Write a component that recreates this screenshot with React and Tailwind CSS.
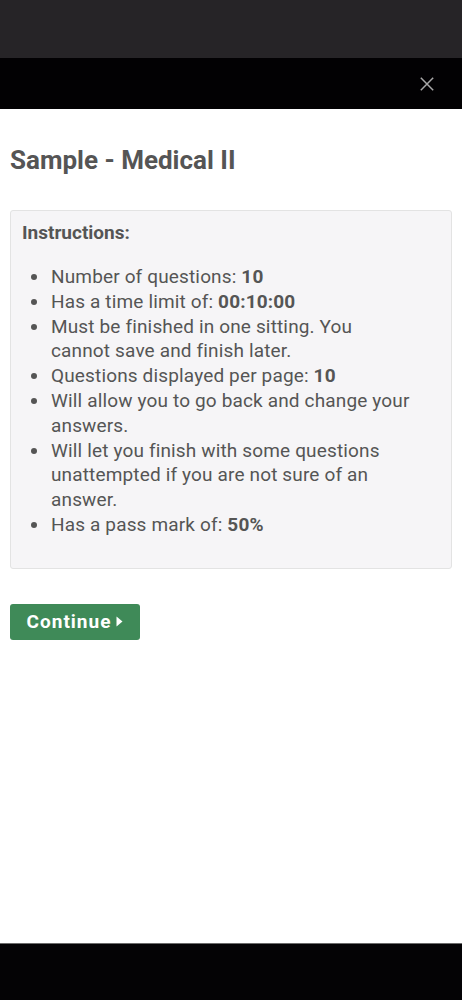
import React from 'react';

const items = [
  { text: 'Number of questions: ', bold: '10' },
  { text: 'Has a time limit of: ', bold: '00:10:00' },
  { text: 'Must be finished in one sitting. You cannot save and finish later.' },
  { text: 'Questions displayed per page: ', bold: '10' },
  { text: 'Will allow you to go back and change your answers.' },
  { text: 'Will let you finish with some questions unattempted if you are not sure of an answer.' },
  { text: 'Has a pass mark of: ', bold: '50%' },
];

const App = () => {
  return (
    <div
      className="flex flex-col h-[1000px] w-full bg-white text-[#555555]"
      style={{ fontFamily: 'Roboto, "Noto Sans", sans-serif' }}
    >
      {/* Status area */}
      <div className="h-[58px] bg-[#262427]" />

      {/* Top bar */}
      <div className="h-[51px] bg-[#020103] flex items-center justify-end pr-[28px]">
        <svg width="14" height="14" viewBox="0 0 14 14" className="text-[#a8a8a8]">
          <path d="M0.8 0.8 L13.2 13.2 M13.2 0.8 L0.8 13.2" stroke="currentColor" strokeWidth="1.5" />
        </svg>
      </div>

      {/* Content */}
      <div className="flex-1 px-[10px] pt-[36px]">
        <h1 className="text-[26px] font-bold leading-[30px] text-[#555555]">Sample - Medical II</h1>

        <div className="mt-[35px] bg-[#f6f5f7] border border-[#e3e3e3] rounded-[3px] pl-[11px] pr-[10px] pt-[10px] pb-[30px]">
          <h3 className="text-[19px] font-bold leading-[24px] text-[#555555]">Instructions:</h3>
          <ul className="mt-[20px] pl-[28px] list-disc text-[19px] leading-[24.8px] tracking-[0.15px] pr-[28px]">
            {items.map((item, i) => (
              <li key={i} className="pl-[1px]">
                {item.text}
                {item.bold && <b className="font-bold">{item.bold}</b>}
              </li>
            ))}
          </ul>
        </div>

        <button className="mt-[35px] h-[36px] w-[130px] rounded-[3px] bg-[#3f8a58] text-white text-[19px] font-bold tracking-[1px] flex items-center justify-center gap-[5px]">
          <span>Continue</span>
          <svg width="7" height="11" viewBox="0 0 7 11">
            <path d="M0.5 0.5 L6.5 5.5 L0.5 10.5 Z" fill="currentColor" />
          </svg>
        </button>
      </div>

      {/* Bottom nav */}
      <div className="h-[57px] bg-[#040305] border-t border-[#6b6b6b]" />
    </div>
  );
};

export default App;
